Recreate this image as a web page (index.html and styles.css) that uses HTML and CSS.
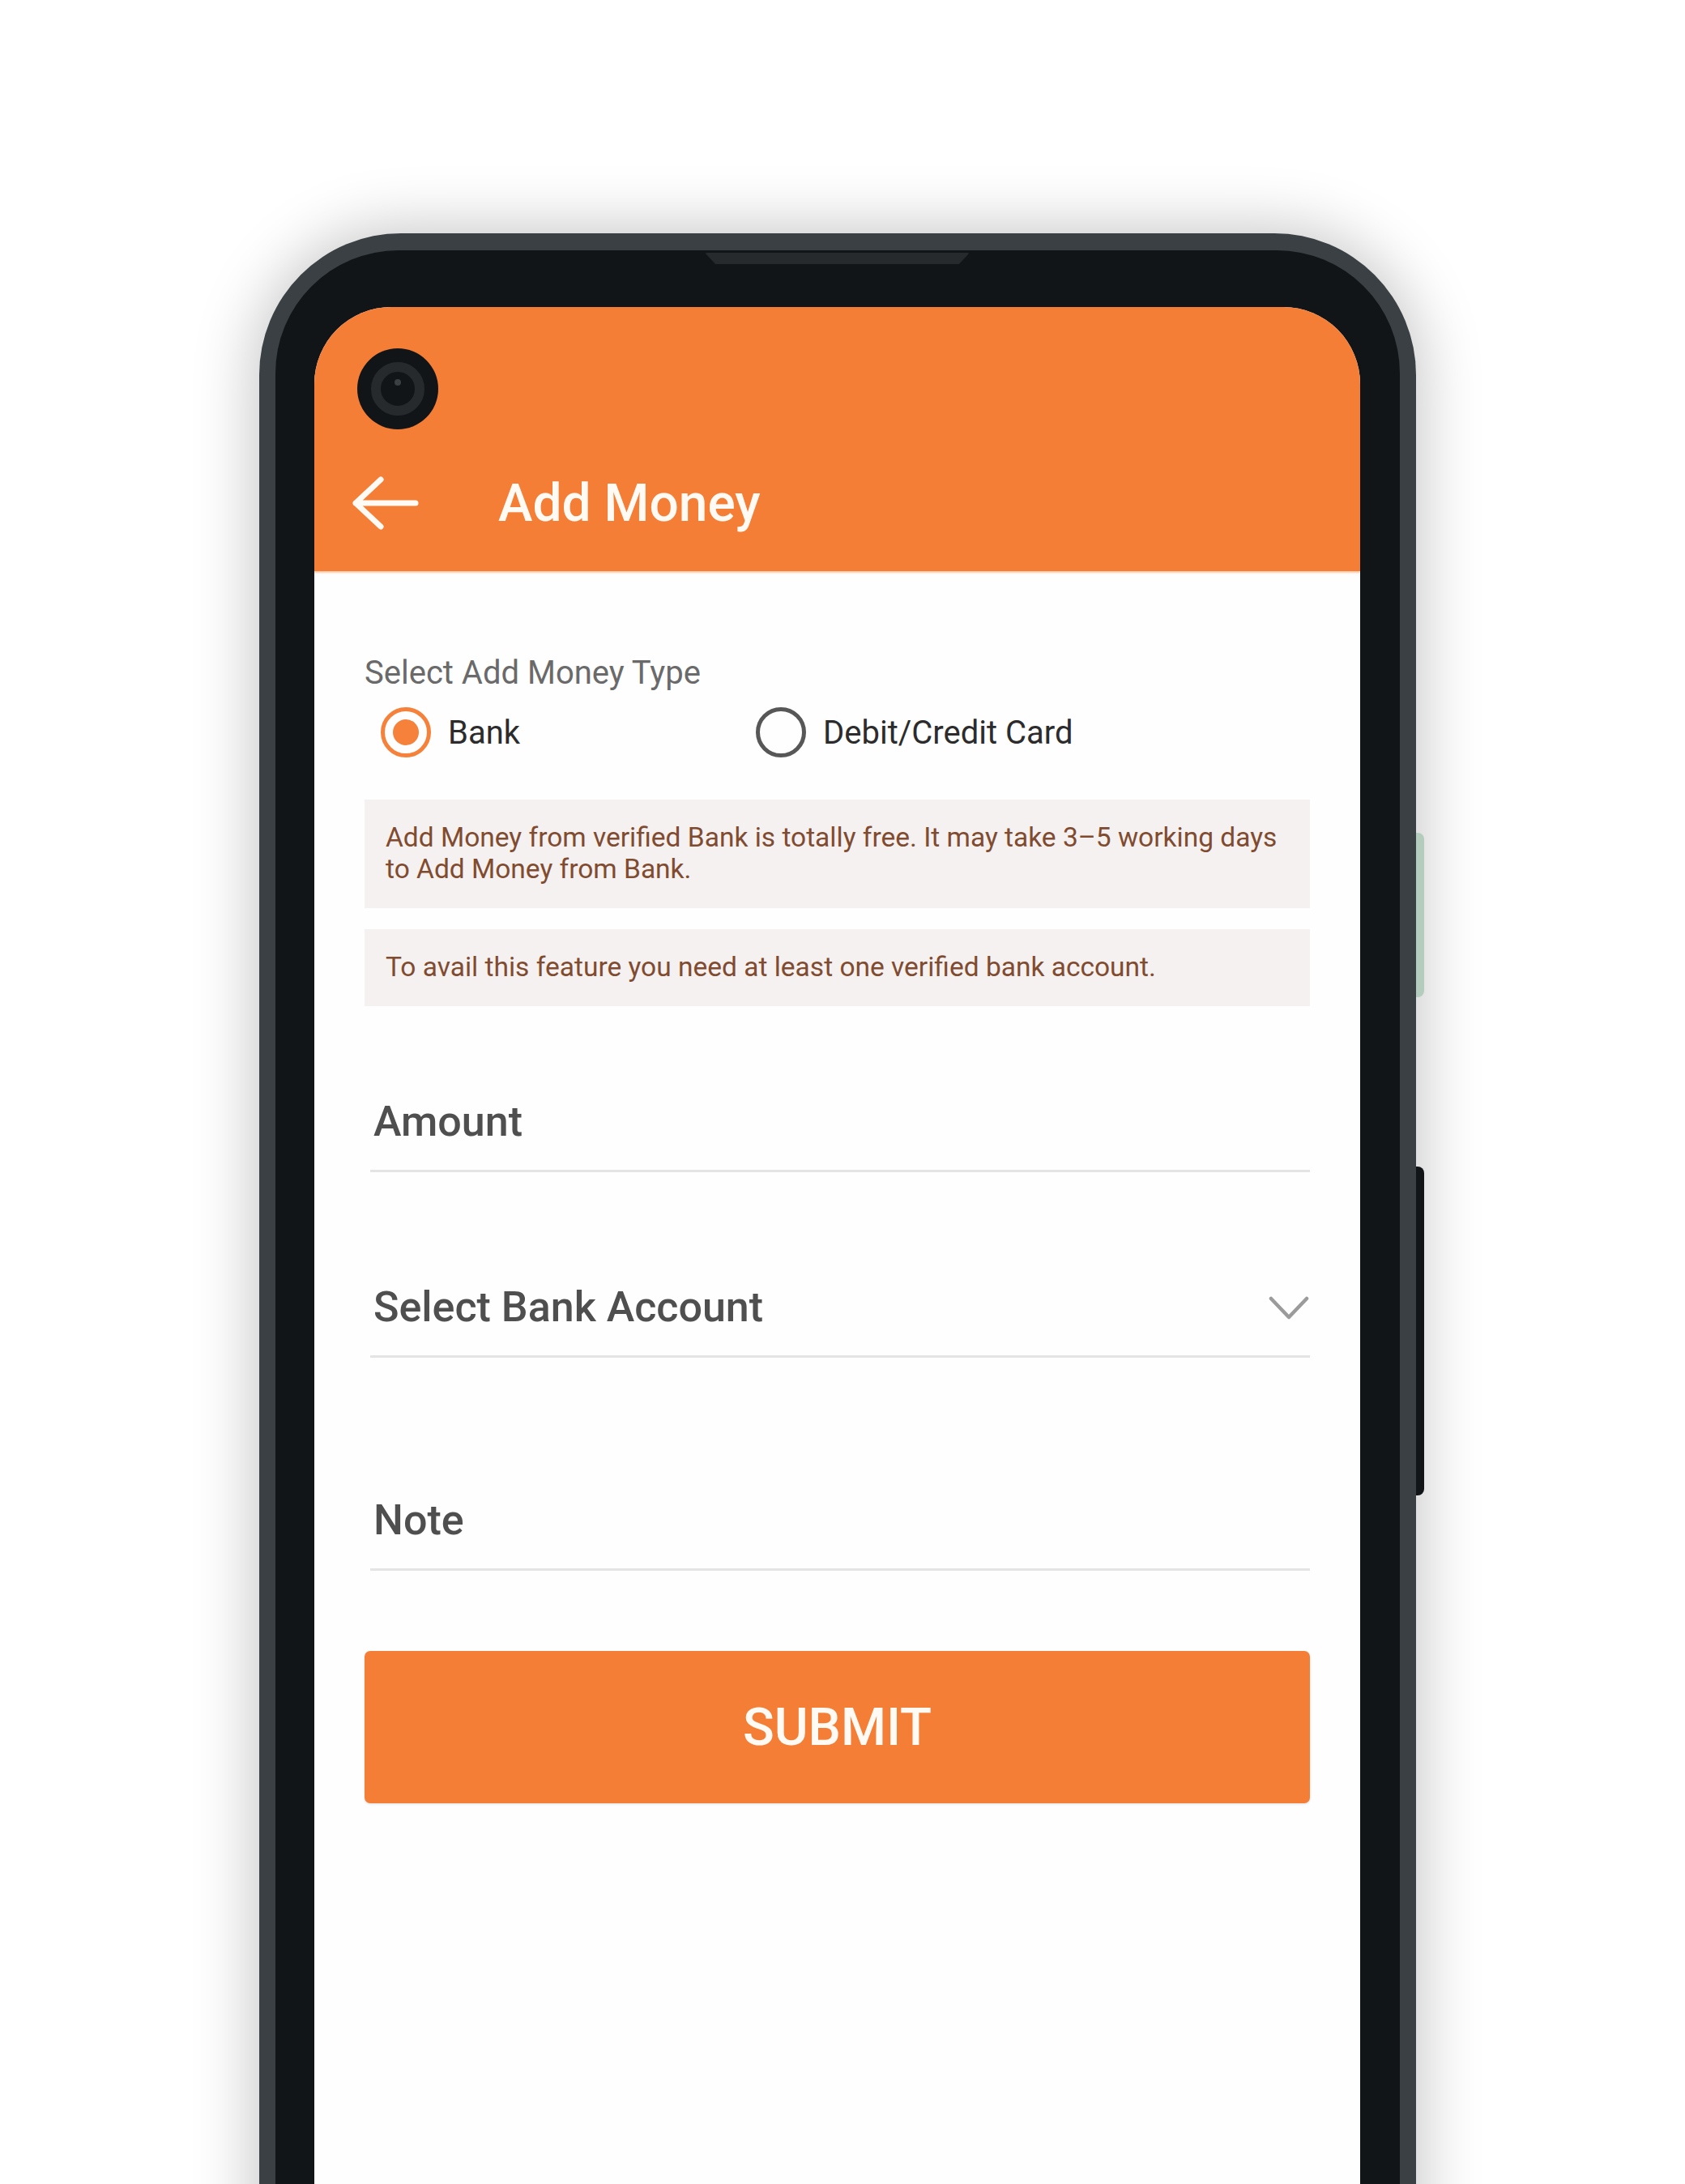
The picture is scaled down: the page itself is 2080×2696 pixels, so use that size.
FILE: index.html
```html
<!DOCTYPE html>
<html lang="en">
<head>
  <meta charset="UTF-8">
  <title>Add Money</title>
  <link rel="stylesheet" href="styles.css">
</head>
<body>
  <div class="phone">
    <span class="side-key side-key--assist"></span>
    <span class="side-key side-key--power"></span>

    <div class="bezel">
      <div class="speaker"></div>

      <div class="screen">
        <header class="appbar">
          <div class="camera"><span class="lens"></span></div>
          <div class="toolbar">
            <svg class="back" width="82" height="66" viewBox="0 0 82 66">
              <path d="M4 33 H78 M35 4 L4 33 L35 62" fill="none" stroke="#fffaf3" stroke-width="7" stroke-linecap="round" stroke-linejoin="round"/>
            </svg>
            <h1>Add Money</h1>
          </div>
        </header>

        <main class="form">
          <p class="label">Select Add Money Type</p>
          <div class="radios">
            <label class="radio radio--on"><span class="dot"></span>Bank</label>
            <label class="radio"><span class="dot"></span>Debit/Credit Card</label>
          </div>

          <div class="notice">Add Money from verified Bank is totally free. It may take 3–5 working days to Add Money from Bank.</div>
          <div class="notice notice--short">To avail this feature you need at least one verified bank account.</div>

          <div class="field field--amount">Amount</div>
          <div class="field field--select">
            <span>Select Bank Account</span>
            <svg width="50" height="30" viewBox="0 0 50 30">
              <path d="M3 4 L25 27 L47 4" fill="none" stroke="#9b9b9b" stroke-width="4.5" stroke-linecap="round" stroke-linejoin="round"/>
            </svg>
          </div>
          <div class="field field--note">Note</div>

          <button class="submit">SUBMIT</button>
        </main>
      </div>
    </div>
  </div>
</body>
</html>
```

FILE: styles.css
```css
html, body {
  margin: 0;
  padding: 0;
  height: 100%;
  overflow: hidden;
  background: #ffffff;
  font-family: Roboto, "Liberation Sans", sans-serif;
}

/* device frame */
.phone {
  position: relative;
  width: 1428px;
  height: 2600px;
  margin: 288px 0 0 320px;
  padding: 21px 20px 0 20px;
  box-sizing: border-box;
  background: #3a4043;
  border-radius: 175px 175px 0 0;
  box-shadow: 0 0 75px 8px rgba(0, 0, 0, 0.22);
}

.side-key {
  position: absolute;
  right: -10px;
  width: 10px;
  border-radius: 0 8px 8px 0;
}

.side-key--assist {
  top: 740px;
  height: 203px;
  background: #b3ccbe;
}

.side-key--power {
  top: 1152px;
  height: 406px;
  background: #121517;
}

.bezel {
  position: relative;
  height: 100%;
  padding: 70px 49px 0 48px;
  box-sizing: border-box;
  background: #121517;
  border-radius: 152px 152px 0 0;
}

.speaker {
  position: absolute;
  top: 3px;
  left: 530px;
  width: 327px;
  height: 14px;
  background: #262a2c;
  clip-path: polygon(0 0, 100% 0, 96% 100%, 4% 100%);
  border-radius: 3px;
}

.screen {
  height: 100%;
  background: #fffefe;
  border-radius: 95px 95px 0 0;
  overflow: hidden;
}

/* app bar */
.appbar {
  position: relative;
  height: 326px;
  padding: 189px 0 0 47px;
  box-sizing: border-box;
  background: #f57e36;
  box-shadow: 0 2px 2px rgba(246, 160, 105, 0.6);
}

.camera {
  position: absolute;
  top: 51px;
  left: 53px;
  width: 100px;
  height: 100px;
  border-radius: 50%;
  background: #121517;
  display: flex;
  align-items: center;
  justify-content: center;
}

.lens {
  width: 42px;
  height: 42px;
  border-radius: 50%;
  background: #121517;
  border: 12px solid #262a2c;
  position: relative;
}

.lens::after {
  content: "";
  position: absolute;
  top: 9px;
  left: 17px;
  width: 8px;
  height: 8px;
  border-radius: 50%;
  background: #3a4043;
}

.toolbar {
  display: flex;
  align-items: center;
  height: 100px;
  margin-top: 3px;
}

.back {
  flex: none;
}

.toolbar h1 {
  margin: 0 0 0 98px;
  font-size: 64px;
  font-weight: 500;
  color: #fffaf3;
}

/* form */
.form {
  padding: 102px 62px 0 62px;
}

.label {
  margin: 0;
  font-size: 40px;
  line-height: 48px;
  color: #6a6a6a;
}

.radios {
  display: flex;
  margin-top: 18px;
  padding-left: 20px;
}

.radio {
  display: flex;
  align-items: center;
  gap: 21px;
  height: 62px;
  font-size: 40px;
  color: #2c2c2c;
}

.radio:first-child {
  width: 463px;
}

.dot {
  width: 62px;
  height: 62px;
  box-sizing: border-box;
  border-radius: 50%;
  border: 5px solid #575757;
  display: flex;
  align-items: center;
  justify-content: center;
}

.radio--on .dot {
  border-color: #f5813a;
}

.radio--on .dot::after {
  content: "";
  width: 32px;
  height: 32px;
  border-radius: 50%;
  background: #f5813a;
}

.notice {
  margin-top: 52px;
  padding: 27px 20px 29px 26px;
  background: #f5f1f1;
  color: #804b2f;
  font-size: 33.5px;
  line-height: 39px;
}

.notice--short {
  margin-top: 26px;
}

.field {
  display: flex;
  align-items: center;
  justify-content: space-between;
  margin-left: 7px;
  padding: 0 1px 28px 4px;
  border-bottom: 3px solid #e4e4e4;
  font-size: 52px;
  font-weight: 500;
  line-height: 62px;
  color: #4f4f4f;
}

.field--amount {
  margin-top: 112px;
}

.field--select {
  margin-top: 136px;
}

.field--note {
  margin-top: 170px;
}

.submit {
  display: block;
  width: 100%;
  height: 188px;
  margin-top: 99px;
  border: none;
  border-radius: 7px;
  background: #f57e36;
  color: #fffaf3;
  font-family: Roboto, "Liberation Sans", sans-serif;
  font-size: 64px;
  font-weight: 500;
  box-shadow: 0 1px 3px rgba(0, 0, 0, 0.12);
}
```
